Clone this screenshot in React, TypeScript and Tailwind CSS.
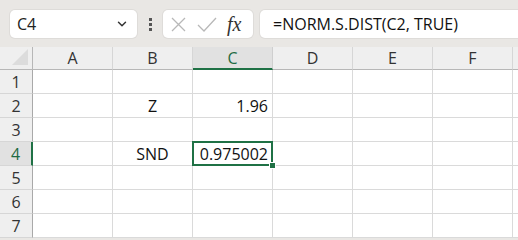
import { ChevronDown } from "lucide-react";

const cols = ["A", "B", "C", "D", "E", "F"];
const rows = [1, 2, 3, 4, 5, 6, 7];

const cells: Record<string, string> = {
  B2: "Z",
  C2: "1.96",
  B4: "SND",
  C4: "0.975002",
};

export default function App() {
  return (
    <div
      className="w-[518px] h-[240px] overflow-hidden bg-[#e9e7e4] text-[#222]"
      style={{ fontFamily: '"Open Sans", "Noto Sans", sans-serif' }}
    >
      {/* formula bar */}
      <div className="h-[47px] flex items-start pt-[10px] pl-[10px]">
        <div className="w-[127px] h-[28px] bg-white rounded-[5px] shadow-[0_0_0_1px_#dedcd9] flex items-center justify-between pl-[7px] pr-[8px]">
          <span className="text-[16px]">C4</span>
          <ChevronDown size={14} strokeWidth={2.5} className="text-[#333]" />
        </div>
        <div className="w-[26px] h-[28px] flex flex-col items-center justify-center gap-[2px]">
          <span className="w-[3px] h-[3px] bg-[#555]" />
          <span className="w-[3px] h-[3px] bg-[#555]" />
          <span className="w-[3px] h-[3px] bg-[#555]" />
        </div>
        <div className="w-[90px] h-[28px] bg-white rounded-[5px] shadow-[0_0_0_1px_#dedcd9] flex items-center pl-[7px] gap-[10px]">
          <svg width="17" height="17" viewBox="0 0 17 17">
            <path d="M2 2 L15 15 M15 2 L2 15" stroke="#b8b8b8" strokeWidth="1.3" fill="none" />
          </svg>
          <svg width="20" height="17" viewBox="0 0 20 17">
            <path d="M1 9 L7 15 L19 2" stroke="#b8b8b8" strokeWidth="1.3" fill="none" />
          </svg>
          <span
            className="text-[20px] italic text-[#333] leading-none"
            style={{ fontFamily: '"Liberation Serif", "DejaVu Serif", serif' }}
          >
            fx
          </span>
        </div>
        <div className="ml-[7px] flex-1 h-[28px] bg-white rounded-l-[5px] shadow-[0_0_0_1px_#dedcd9] flex items-center pl-[13px]">
          <span className="text-[16px] text-[#111]">=NORM.S.DIST(C2, TRUE)</span>
        </div>
      </div>

      {/* grid */}
      <div className="grid grid-cols-[33px_repeat(6,80px)_5px] grid-rows-[23px_repeat(7,24px)] bg-white text-[16px]">
        <div className="bg-[#efefef] border-r border-b border-[#b7b7b7] relative overflow-hidden">
          <div className="absolute right-[4px] bottom-[4px] w-0 h-0 border-l-[16px] border-l-transparent border-b-[16px] border-b-[#dcdcdc]" />
        </div>
        {cols.map((c) =>
          c === "C" ? (
            <div
              key={c}
              className="bg-[#e1e1e1] border-r border-[#cfcfcf] border-b-[2px] border-b-[#1f7145] flex items-center justify-center text-[#1f6b43] pt-[1px]"
            >
              {c}
            </div>
          ) : (
            <div
              key={c}
              className="bg-[#efefef] border-r border-[#d6d6d6] border-b border-b-[#b7b7b7] flex items-center justify-center text-[#333]"
            >
              {c}
            </div>
          )
        )}
        <div className="bg-[#efefef] border-b border-[#b7b7b7]" />

        {rows.map((r) => (
          <Row key={r} r={r} />
        ))}
      </div>
    </div>
  );
}

function Row({ r }: { r: number }) {
  const active = r === 4;
  return (
    <>
      <div
        className={
          active
            ? "bg-[#e1e1e1] border-r-[2px] border-r-[#1f7145] border-b border-b-[#d6d6d6] flex items-center justify-center text-[#1f6b43]"
            : "bg-[#efefef] border-r border-r-[#a9a9a9] border-b border-b-[#d6d6d6] flex items-center justify-center text-[#333]"
        }
      >
        {r}
      </div>
      {cols.map((c) => {
        const id = `${c}${r}`;
        const val = cells[id];
        const isActive = id === "C4";
        const alignRight = val && !isNaN(Number(val));
        return (
          <div
            key={id}
            className={`relative border-r border-b border-[#dadada] flex items-center ${
              alignRight ? "justify-end pr-[4px]" : "justify-center"
            } text-[#111]`}
          >
            {val}
            {isActive && (
              <>
                <div className="absolute left-[-1px] top-[-1px] right-[-1px] bottom-[-1px] border-[2px] border-[#1f7145]" />
                <div className="absolute right-[-4px] bottom-[-4px] w-[7px] h-[7px] bg-[#1f7145] border border-white z-10" />
              </>
            )}
          </div>
        );
      })}
      <div className="border-b border-[#dadada]" />
    </>
  );
}
